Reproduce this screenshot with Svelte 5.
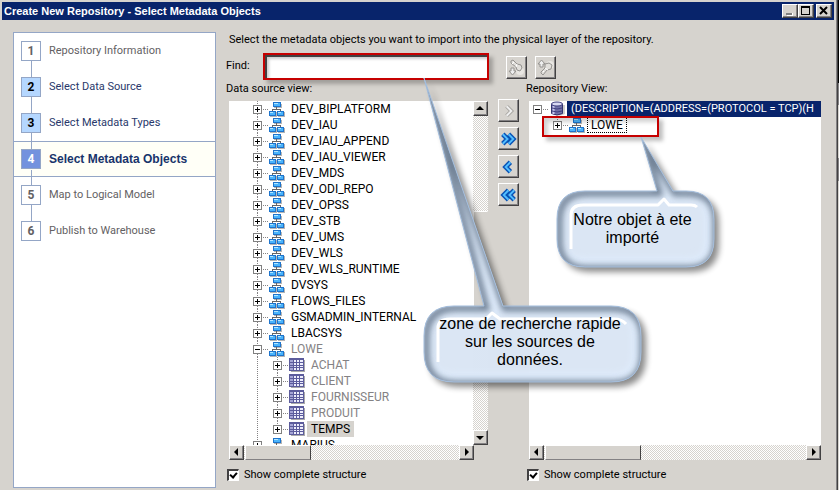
<script lang="ts">
  type Step = { label: string; status: string };
  type Row = { name: string; kind: string; level: number; open?: boolean; muted?: boolean; selected?: boolean };

  const steps: Step[] = [
    { label: 'Repository Information', status: 'idle' },
    { label: 'Select Data Source', status: 'done' },
    { label: 'Select Metadata Types', status: 'done' },
    { label: 'Select Metadata Objects', status: 'current' },
    { label: 'Map to Logical Model', status: 'idle' },
    { label: 'Publish to Warehouse', status: 'idle' }
  ];

  const schemas = [
    'DEV_BIPLATFORM', 'DEV_IAU', 'DEV_IAU_APPEND', 'DEV_IAU_VIEWER', 'DEV_MDS',
    'DEV_ODI_REPO', 'DEV_OPSS', 'DEV_STB', 'DEV_UMS', 'DEV_WLS', 'DEV_WLS_RUNTIME',
    'DVSYS', 'FLOWS_FILES', 'GSMADMIN_INTERNAL', 'LBACSYS'
  ];
  const tables = ['ACHAT', 'CLIENT', 'FOURNISSEUR', 'PRODUIT', 'TEMPS'];

  let find = $state('');
  let lowe = $state(true);
  let showSource = $state(true);
  let showRepository = $state(true);

  let source: Row[] = $derived([
    ...schemas.map((name) => ({ name, kind: 'schema', level: 1 })),
    { name: 'LOWE', kind: 'schema', level: 1, open: lowe, muted: true },
    ...(lowe ? tables : []).map((name) => ({
      name,
      kind: 'table',
      level: 2,
      muted: name !== 'TEMPS',
      selected: name === 'TEMPS'
    })),
    { name: 'MARIUS', kind: 'schema', level: 1 }
  ]);

  const transfers = [
    { label: 'Import selected', points: ['8,6 13,11 8,16'], flip: false, off: true },
    { label: 'Import all', points: ['4,6 9,11 4,16', '10,6 15,11 10,16'], flip: false, off: false },
    { label: 'Remove selected', points: ['8,6 13,11 8,16'], flip: true, off: false },
    { label: 'Remove all', points: ['4,6 9,11 4,16', '10,6 15,11 10,16'], flip: true, off: false }
  ];

  function toggle(row: Row) {
    if (row.name === 'LOWE') lowe = !lowe;
  }
</script>

{#snippet twisty(open: boolean, up: boolean, down: boolean)}
  <svg width="16" height="16" shape-rendering="crispEdges">
    {#if up}<path class="guide" d="M4.5 0V4" />{/if}
    {#if down}<path class="guide" d="M4.5 13V16" />{/if}
    <path class="guide" d="M10 8.5H16" />
    <rect x="0.5" y="4.5" width="8" height="8" fill="#fff" stroke="#808080" />
    <path d="M2 8.5H7" stroke="#000" />
    {#if !open}<path d="M4.5 6V11" stroke="#000" />{/if}
  </svg>
{/snippet}

{#snippet icon(kind: string)}
  {#if kind === 'schema'}
    <svg width="18" height="16" viewBox="0 0 18 16" shape-rendering="crispEdges">
      <path d="M5 3h8v4H5zM1 11h7v5H1zM9 11h7v5H9z" fill="#b5b5b5" />
      <path d="M7.500 6V9M3.500 10V8.500H11.500V10" fill="none" stroke="#666" />
      <rect x="4" y="1" width="8" height="5" fill="#1e74cc" />
      <rect x="0" y="10" width="7" height="5" fill="#1e74cc" />
      <rect x="8" y="10" width="7" height="5" fill="#1e74cc" />
      <path d="M5 2h6v3H5zM1 11h5v3H1zM9 11h5v3H9z" fill="#4ab4fc" />
      <path d="M5 2h4v1H5zM1 11h3v1H1zM9 11h3v1H9z" fill="#b5e6ff" />
    </svg>
  {:else if kind === 'table'}
    <svg width="18" height="16" viewBox="0 0 18 16" shape-rendering="crispEdges">
      <rect x="2" y="3" width="14" height="12" fill="#aaa" />
      <rect x="0" y="1" width="15" height="13" fill="#5c5c9c" />
      <path d="M1 3h3v2H1zM1 6h3v2H1zM1 9h3v1H1zM1 11h3v2H1z" fill="#a5a5d5" />
      <path d="M5 3h2v2H5zM8 3h2v2H8zM11 3h3v2h-3zM5 6h2v2H5zM8 6h2v2H8zM11 6h3v2h-3zM5 9h2v1H5zM8 9h2v1H8zM11 9h3v1h-3zM5 11h2v2H5zM8 11h2v2H8zM11 11h3v2h-3z" fill="#eeeefc" />
    </svg>
  {:else}
    <svg width="18" height="16" viewBox="0 0 18 16">
      <path d="M4 4v9q6 3 12 0V4z" fill="#999" opacity="0.5" />
      <path d="M2.500 3v9.500q5.500 3 11 0V3z" fill="#7070a8" stroke="#343470" />
      <path d="M4.500 5v8" stroke="#c8c8ee" stroke-width="2" />
      <ellipse cx="8" cy="3" rx="5.500" ry="2" fill="#d8d8f2" stroke="#404080" />
      <path d="M3 7q5 2 10 0M3 10q5 2 10 0" fill="none" stroke="#404080" />
    </svg>
  {/if}
{/snippet}

{#snippet arrow(points: string)}
  <svg width="9" height="9"><polygon {points} fill="#000" /></svg>
{/snippet}

{#snippet hscroll(name: string)}
  <div class="hscroll">
    <button class="scroll-btn" aria-label="Scroll {name} left">{@render arrow('6,0 6,8 2,4')}</button>
    <div class="thumb"></div>
    <button class="scroll-btn end" aria-label="Scroll {name} right">{@render arrow('3,0 3,8 7,4')}</button>
  </div>
{/snippet}

{#snippet torch(down: boolean)}
  <svg width="19" height="20" viewBox="0 0 19 20">
    <g fill="none" stroke-linejoin="round">
      {#if down}
        <circle cx="13" cy="13" r="4" fill="#e8e6e2" />
        <path d="M4 3l2-1 4 4 4 1 1 3-2 3-3-1-1-3-5-4z" fill="#e2e0dc" stroke="#94928f" />
        <path d="M10 6l-1 3M7 4l-2 2" stroke="#fff" />
        <path d="M4 10h3v3h2l-3.500 4L2 13h2z" fill="#eee" stroke="#94928f" />
      {:else}
        <circle cx="14" cy="7" r="4" fill="#e8e6e2" />
        <path d="M5 15l2 2 4-5 4-1 1-4-3-2-4 1v4l-4 4z" fill="#e2e0dc" stroke="#94928f" />
        <path d="M9 10l3 2M7 13l1 1" stroke="#fff" />
        <path d="M4 9h3V6h2L5.500 2 2 6h2z" fill="#eee" stroke="#94928f" />
      {/if}
    </g>
  </svg>
{/snippet}

{#snippet bubble(id: string, w: number, h: number, body: string, gloss: string)}
  <svg class="bubble" width={w} height={h} viewBox="0 0 {w} {h}">
    <defs>
      <filter id="{id}-soft" x="-20%" y="-20%" width="140%" height="140%"><feGaussianBlur stdDeviation="3" /></filter>
      <clipPath id="{id}-clip"><path d={body} /></clipPath>
    </defs>
    <path d={body} fill="#000" opacity="0.45" transform="translate(5 5)" filter="url(#{id}-soft)" />
    <path d={body} fill="#dfebfa" fill-opacity="0.95" />
    <g clip-path="url(#{id}-clip)">
      <path d={body} fill="none" stroke="#dfecfc" stroke-width="18" filter="url(#{id}-soft)" />
      <path d={body} fill="none" stroke="#55667c" stroke-width="7" opacity="0.8" transform="translate(2 2)" filter="url(#{id}-soft)" />
      <path d={gloss} fill="none" stroke="#fff" stroke-width="3" stroke-linejoin="round" />
    </g>
    <path d={body} fill="none" stroke="#a3bddc" />
  </svg>
{/snippet}

<div class="desktop">
  <div class="window">
    <header>
      <h1>Create New Repository - Select Metadata Objects</h1>
      <button aria-label="Minimize">
        <svg width="14" height="12"><path d="M4 9.500h6" stroke="#fff" stroke-width="3" /><path d="M3 9h6" stroke="#808080" stroke-width="2" /></svg>
      </button>
      <button aria-label="Maximize">
        <svg width="14" height="12" shape-rendering="crispEdges"><path d="M2.500 2.500h8v7h-8zM2 1.500h9" fill="none" stroke="#000" /></svg>
      </button>
      <button class="close" aria-label="Close">
        <svg width="14" height="12"><path d="M3 2l7 7M10 2l-7 7" stroke="#000" stroke-width="2" /></svg>
      </button>
    </header>

    <div class="wizard">
      <ol class="steps">
        {#each steps as step, i}
          <li class={step.status}>
            <span class="num">{i + 1}</span>
            <a href="#step-{i + 1}">{step.label}</a>
          </li>
        {/each}
      </ol>

      <main>
        <p class="intro">Select the metadata objects you want to import into the physical layer of the repository.</p>

        <div class="find">
          <label for="find">Find:</label>
          <div class="find-field">
            <input id="find" type="text" bind:value={find} />
            <div class="callout search">
              {@render bubble(
                'search',
                232,
                320,
                'M30 228H60L0 0L79 228H187Q217 228 217 258V274Q217 304 187 304H30Q0 304 0 274V258Q0 228 30 228Z',
                'M14 284V250Q14 241 26 241H62L68 235L76 241H190Q198 241 202 246'
              )}
              <p>zone de recherche rapide sur les sources de données.</p>
            </div>
          </div>
          <button class="tool" aria-label="Find down" disabled>{@render torch(true)}</button>
          <button class="tool" aria-label="Find up" disabled>{@render torch(false)}</button>
        </div>

        <div class="panels">
          <section class="sources">
            <h2>Data source view:</h2>
            <div class="view">
              <div class="pane">
                <ul class="tree">
                  {#each source as row}
                    <li>
                      <span class="indent" class:line={row.level === 2}></span>
                      {#if row.level === 2}<span class="indent-child"></span>{/if}
                      <button class="twisty" aria-label="Toggle {row.name}" onclick={() => toggle(row)}>
                        {@render twisty(!!row.open, true, row.name !== 'TEMPS')}
                      </button>
                      {@render icon(row.kind)}
                      <span class="name" class:muted={row.muted} class:selected={row.selected}>{row.name}</span>
                    </li>
                  {/each}
                </ul>
                <div class="vscroll">
                  <button class="scroll-btn" aria-label="Scroll up">{@render arrow('0,6 8,6 4,2')}</button>
                  <div class="above"></div>
                  <div class="thumb"></div>
                  <div class="below"></div>
                  <button class="scroll-btn" aria-label="Scroll down">{@render arrow('0,3 8,3 4,7')}</button>
                </div>
              </div>
              {@render hscroll('sources')}
            </div>
            <label class="check"><input type="checkbox" bind:checked={showSource} />Show complete structure</label>
          </section>

          <div class="transfers">
            {#each transfers as t}
              <button class="tool" class:flip={t.flip} aria-label={t.label} disabled={t.off}>
                <svg width="20" height="22" viewBox="0 0 20 22">
                  {#each t.points as points}
                    <polyline {points} class="outer" />
                    <polyline {points} class="inner" />
                  {/each}
                </svg>
              </button>
            {/each}
          </div>

          <section class="repository">
            <h2>Repository View:</h2>
            <div class="view">
              <div class="pane">
                <ul class="tree">
                  <li>
                    <span class="margin"></span>
                    <button class="twisty" aria-label="Toggle connection">{@render twisty(true, false, false)}</button>
                    {@render icon('database')}
                    <span class="name active">(DESCRIPTION=(ADDRESS=(PROTOCOL = TCP)(H</span>
                  </li>
                  <li>
                    <span class="indent"></span>
                    <button class="twisty" aria-label="Toggle LOWE">{@render twisty(false, true, false)}</button>
                    {@render icon('schema')}
                    <span class="name focus">LOWE</span>
                  </li>
                </ul>
              </div>
              {@render hscroll('repository')}
              <div class="marker"></div>
              <div class="callout result">
                {@render bubble(
                  'result',
                  175,
                  150,
                  'M28 54H100L84 0L116 54H129Q157 54 157 82V102Q157 130 129 130H28Q0 130 0 102V82Q0 54 28 54Z',
                  'M14 112V78Q14 68 26 68H101L107 62L112 68H134Q138 68 140 70'
                )}
                <p>Notre objet à ete importé</p>
              </div>
            </div>
            <label class="check"><input type="checkbox" bind:checked={showRepository} />Show complete structure</label>
          </section>
        </div>
      </main>
    </div>
  </div>
  <div class="behind"></div>
</div>

<style>
  :global(body) {
    margin: 0;
    background: #d6d3ce;
    overflow: hidden;
  }

  .desktop {
    --face: #d6d3ce;
    --navy: #08246b;
    --dither: repeating-conic-gradient(#fff 0% 25%, #d6d3ce 0% 50%) 0 0 / 2px 2px;
    display: flex;
    min-height: 100vh;
    font-family: Roboto, 'Liberation Sans', sans-serif;
    font-size: 11px;
    line-height: 16px;
    color: #000;
  }

  .window {
    flex: 1;
    min-width: 0;
    display: flex;
    flex-direction: column;
    padding: 2px;
    box-sizing: border-box;
    background: var(--face);
    border-right: 1px solid #848284;
  }

  .behind {
    width: 2px;
    box-sizing: border-box;
    border-left: 1px solid #424142;
    background: linear-gradient(#000 83px, #848284 83px 105px, #d6d3ce 105px 158px, #848284 158px 181px, #d6d3ce 181px);
  }

  h1, h2, p, ul, ol {
    margin: 0;
    padding: 0;
    font-size: inherit;
    font-weight: normal;
    list-style: none;
  }

  button {
    display: flex;
    align-items: center;
    justify-content: center;
    margin: 0;
    padding: 0;
    background: var(--face);
    border: 1px solid;
    border-color: #fff #424142 #424142 #fff;
    box-shadow: inset -1px -1px #848284;
    box-sizing: border-box;
  }

  header {
    display: flex;
    align-items: center;
    height: 18px;
    padding: 0 2px;
    background: var(--navy);
    color: #fff;
  }

  header h1 {
    flex: 1;
    font-family: 'Liberation Sans', sans-serif;
    font-weight: bold;
    white-space: nowrap;
  }

  header button {
    width: 16px;
    height: 14px;
  }

  header .close {
    margin-left: 2px;
  }

  .wizard {
    flex: 1;
    display: flex;
    gap: 10px;
    padding: 12px 13px 0 11px;
  }

  .steps {
    width: 203px;
    box-sizing: border-box;
    flex: none;
    background: #fff;
    border: 1px solid #94a6c6;
  }

  .steps li {
    position: relative;
    display: flex;
    align-items: center;
    gap: 8px;
    height: 36px;
    padding-left: 7px;
    box-sizing: border-box;
  }

  .steps li:not(:last-child)::after {
    content: '';
    position: absolute;
    left: 17px;
    top: 28px;
    height: 16px;
    border-left: 1px solid #94a6c6;
    z-index: 1;
  }

  .num {
    width: 20px;
    height: 20px;
    box-sizing: border-box;
    border: 1px solid #94a6c6;
    background: #fff;
    color: #636163;
    font-size: 12px;
    font-weight: bold;
    line-height: 18px;
    text-align: center;
  }

  .steps a {
    color: #636163;
    text-decoration: none;
  }

  .done .num {
    background: #b5d7ff;
    color: #000;
  }

  .steps .done a {
    color: #29386b;
  }

  .steps .current {
    background: #fffff7;
    border: solid #94a6c6;
    border-width: 1px 0;
  }

  .current .num {
    background: #7392de;
    color: #fff;
  }

  .steps .current a {
    color: #18346b;
    font-family: 'Liberation Sans', sans-serif;
    font-size: 12px;
    font-weight: bold;
  }

  main {
    flex: 1;
    min-width: 0;
  }

  .intro {
    padding-left: 3px;
    white-space: nowrap;
  }

  .find {
    display: flex;
    align-items: flex-start;
    padding-top: 5px;
    height: 27px;
  }

  .find label {
    width: 37px;
    padding-top: 5px;
  }

  .find-field {
    position: relative;
    width: 226px;
    height: 27px;
    box-sizing: border-box;
    border: 2px solid #c60000;
    box-shadow: 4px 4px 4px rgba(0, 0, 0, 0.25);
    margin-right: 17px;
  }

  .find-field input {
    display: block;
    width: 100%;
    height: 100%;
    box-sizing: border-box;
    margin: 0;
    padding: 0 2px;
    border: 2px solid #424142;
    border-width: 2px 0 0 2px;
    box-shadow: inset 2px 2px 3px rgba(0, 0, 0, 0.2);
    outline: 0;
    background: #fff;
    font: inherit;
  }

  .find .tool {
    margin: 3px 8px 0 0;
  }

  .tool {
    width: 21px;
    height: 23px;
  }

  .panels {
    display: grid;
    grid-template-columns: minmax(0, 262fr) 21px minmax(0, 292fr);
    gap: 10px;
  }

  h2 {
    height: 21px;
    line-height: 18px;
  }

  .sources .view {
    margin-left: 3px;
  }

  .repository h2 {
    margin-left: -3px;
  }

  .view {
    position: relative;
  }

  .pane {
    display: flex;
    height: 344px;
    background: #fff;
  }

  .tree {
    flex: 1;
    min-width: 0;
    overflow: hidden;
  }

  .tree li {
    display: flex;
    height: 16px;
    white-space: nowrap;
  }

  .tree svg,
  .twisty,
  .margin,
  .indent {
    flex: none;
  }

  .margin {
    width: 4px;
  }

  .indent {
    width: 24px;
  }

  .indent-child {
    width: 20px;
    flex: none;
  }

  .line {
    background: repeating-linear-gradient(#848284 0 1px, transparent 1px 2px) 28px 0 / 1px 16px no-repeat;
    margin-right: -20px;
    padding-right: 20px;
  }

  .twisty {
    width: 16px;
    background: none;
    border: 0;
    box-shadow: none;
  }

  .guide {
    fill: none;
    stroke: #848284;
    stroke-dasharray: 1 1;
  }

  .name {
    padding: 0 3px;
    border: 1px solid transparent;
    line-height: 14px;
    font-size: 12px;
  }

  .muted {
    color: #848284;
  }

  .selected {
    background: var(--face);
  }

  .active {
    flex: 1;
    padding-right: 0;
    background: var(--navy);
    color: #fff;
    font-size: 11px;
  }

  .focus {
    border: 1px dotted #000;
  }

  .vscroll {
    display: flex;
    flex-direction: column;
    width: 15px;
    background: var(--dither);
  }

  .scroll-btn {
    width: 15px;
    height: 15px;
    flex: none;
  }

  .thumb {
    background: var(--face);
    border: 1px solid;
    border-color: #fff #424142 #848284 #fff;
    box-sizing: border-box;
  }

  .above {
    flex: 96;
  }

  .vscroll .thumb {
    flex: 116;
    border-right-color: #d6d3ce;
  }

  .below {
    flex: 102;
  }

  .hscroll {
    display: flex;
    height: 15px;
    background: var(--dither);
  }

  .hscroll .thumb {
    width: 66px;
    margin-left: 1px;
  }

  .repository .hscroll .thumb {
    width: 96px;
  }

  .hscroll .end {
    margin-left: auto;
  }

  .sources .hscroll {
    margin-right: 14px;
  }

  .check {
    display: flex;
    align-items: center;
    gap: 5px;
    padding-top: 7px;
    margin-left: 1px;
    width: max-content;
  }

  .check input {
    appearance: none;
    width: 12px;
    height: 12px;
    box-sizing: border-box;
    margin: 0;
    border: solid;
    border-width: 2px 1px 1px 2px;
    border-color: #424142 #fff #fff #424142;
    background: #fff;
  }

  .check input:checked::after {
    content: '';
    display: block;
    width: 3px;
    height: 5px;
    margin: 0 0 0 2px;
    border: solid #000;
    border-width: 0 2px 2px 0;
    transform: rotate(40deg);
  }

  .repository .check {
    margin-left: -2px;
  }

  .transfers {
    display: flex;
    flex-direction: column;
    gap: 5px;
    padding-top: 19px;
  }

  .flip svg {
    transform: scaleX(-1);
  }

  .transfers polyline {
    fill: none;
  }

  .outer {
    stroke: #0852b5;
    stroke-width: 5px;
  }

  .inner {
    stroke: #52beff;
    stroke-width: 2px;
  }

  .tool:disabled .outer {
    stroke: #a5a39f;
    stroke-width: 4px;
  }

  .tool:disabled .inner {
    stroke: #efefef;
  }

  .marker {
    position: absolute;
    left: 13px;
    top: 15px;
    width: 117px;
    height: 21px;
    box-sizing: border-box;
    border: 2px solid #c60000;
    box-shadow: 4px 4px 4px rgba(0, 0, 0, 0.25), inset 4px 4px 4px rgba(0, 0, 0, 0.18);
    pointer-events: none;
  }

  .callout {
    position: absolute;
    z-index: 2;
    pointer-events: none;
    font-family: 'Liberation Sans', sans-serif;
    font-size: 16px;
    line-height: 18px;
    text-align: center;
  }

  .bubble {
    display: block;
    overflow: visible;
  }

  .callout p {
    position: absolute;
  }

  .search {
    left: 159px;
    top: 23px;
  }

  .search p {
    left: 12px;
    right: 32px;
    top: 237px;
  }

  .result {
    left: 28px;
    top: 36px;
  }

  .result p {
    left: 10px;
    right: 34px;
    top: 74px;
  }
</style>
